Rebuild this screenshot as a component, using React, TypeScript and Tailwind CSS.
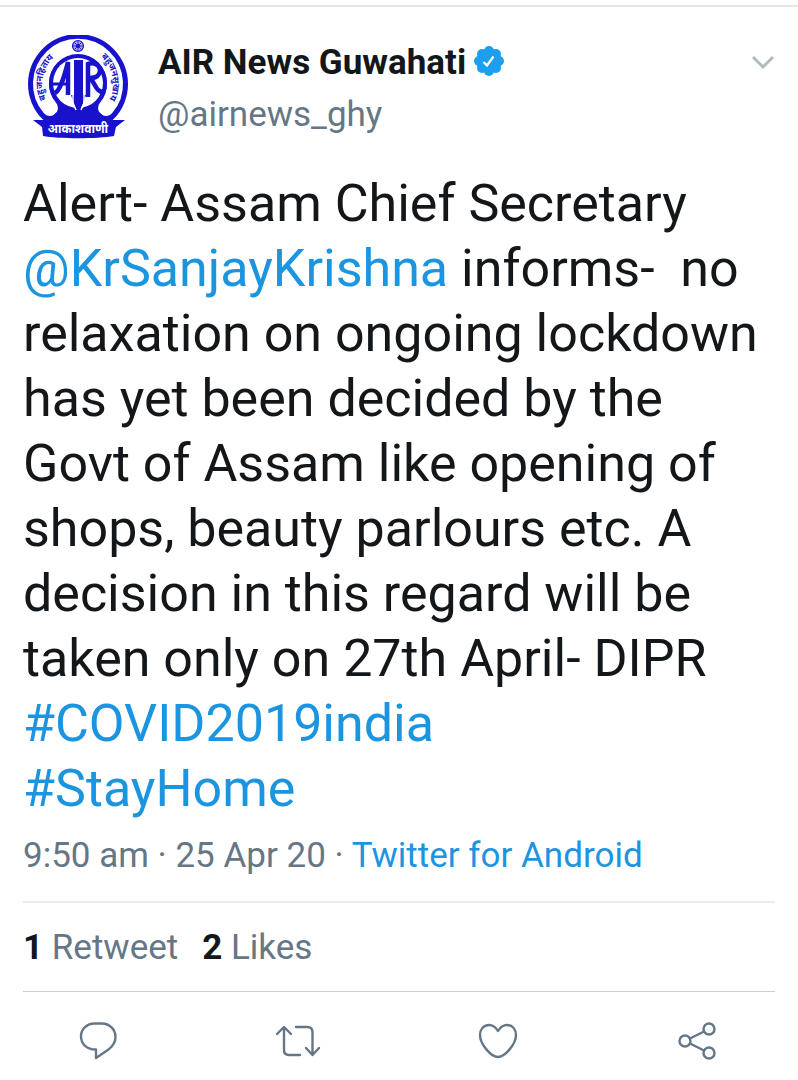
import { useState } from "react";

function Avatar() {
  return (
    <svg viewBox="0 0 100 104" className="h-[104px] w-[100px]" role="img" aria-label="AIR News Guwahati">
      {/* rings */}
      <circle cx="50" cy="49" r="50" fill="#1912cc" />
      <path d="M22 73A37 37 0 1 1 78 73" fill="none" stroke="#fff" strokeWidth="16" strokeLinecap="round" />
      <circle cx="50" cy="48" r="29" fill="#1912cc" />
      <circle cx="50" cy="48" r="25" fill="#fff" />

      {/* star wheel */}
      <circle cx="50" cy="11" r="5.500" fill="#a5a2ee" stroke="#1912cc" strokeWidth="1.2" />
      <path d="M50 6v10M45 11h10M46.500 7.500l7 7M53.500 7.500l-7 7" stroke="#1912cc" strokeWidth="0.8" />
      <circle cx="50" cy="11" r="2" fill="#1912cc" />

      {/* AIR monogram */}
      <g fill="none" stroke="#1912cc">
        <path d="M27 58C33 55 37 38 40 27V60" strokeWidth="4.500" />
        <path d="M25 49H42" strokeWidth="3" />
        <path d="M60 62V29C69 26 74 33 71 39C69 43 65 43 61 43C67 45 67 58 76 57" strokeWidth="4.500" />
      </g>
      <path d="M43 60L49 78H51L58 60" fill="#1912cc" />
      <path d="M46 25h9v44l-4.500 7l-4.500-7z" fill="#1912cc" />
      <path d="M45 24v44l3 7M56 24v44l-3 7" fill="none" stroke="#fff" strokeWidth="1.500" />

      {/* ribbon */}
      <path d="M30 76C40 80 60 80 70 76L80 85H97L88 92L86 101C70 104 30 104 15 101L14 92L5 85H20Z" fill="#1912cc" />
      <text x="50" y="98" textAnchor="middle" fontSize="12" fontWeight="700" fill="#fff" fontFamily="'Noto Sans Devanagari', 'Noto Sans', sans-serif">
        आकाशवाणी
      </text>

      <path id="motto-left" d="M18 64A35 35 0 0 1 29 20" fill="none" />
      <path id="motto-right" d="M73 22A35 35 0 0 1 79 68" fill="none" />
      <g fontSize="9" fontWeight="700" fill="#1912cc" fontFamily="'Noto Sans Devanagari', 'Noto Sans', sans-serif">
        <text>
          <textPath href="#motto-left">बहुजनहिताय</textPath>
        </text>
        <text>
          <textPath href="#motto-right">बहुजनसुखाय</textPath>
        </text>
      </g>
    </svg>
  );
}

function VerifiedBadge() {
  return (
    <svg viewBox="0 0 30 30" className="mb-1 size-[30px] shrink-0" role="img" aria-label="Verified account">
      <g fill="#1d9ff0">
        <circle cx="15" cy="15" r="12.500" />
        <circle cx="15" cy="5" r="5" />
        <circle cx="22" cy="8" r="5" />
        <circle cx="25" cy="15" r="5" />
        <circle cx="22" cy="22" r="5" />
        <circle cx="15" cy="25" r="5" />
        <circle cx="8" cy="22" r="5" />
        <circle cx="5" cy="15" r="5" />
        <circle cx="8" cy="8" r="5" />
      </g>
      <path d="M9.500 16l3.500 3.500L19.500 10.500" fill="none" stroke="#fff" strokeWidth="2.2" />
    </svg>
  );
}

const iconProps = {
  viewBox: "0 0 48 40",
  className: "h-10 w-12",
  fill: "none",
  stroke: "currentColor",
  strokeWidth: 2.4,
  strokeLinecap: "round" as const,
  strokeLinejoin: "round" as const,
};

const actions = [
  {
    label: "Reply",
    icon: (
      <svg {...iconProps}>
        <path d="M19.500 28.500C11 28.500 5 23 5 15.500C5 8 11 2.500 18.500 2.500H26C33.500 2.500 39.500 8.500 39.500 16C39.500 21 37 25 32.500 28.500L20 37V28.500Z" />
      </svg>
    ),
  },
  {
    label: "Retweet",
    icon: (
      <svg {...iconProps}>
        <path d="M2 13L9 6L16 13M9 7V29Q9 34 14 34H25M44 27L37.500 34L31 27M37.500 33V11Q37.500 6 32.500 6H21" />
      </svg>
    ),
  },
  {
    label: "Like",
    icon: (
      <svg {...iconProps}>
        <path d="M23 10C20 5 17 4 14 4C8 4 5 9 5 14C5 23 16 36 23 36C30 36 41 23 41 14C41 9 38 4 32 4C29 4 26 5 23 10Z" />
      </svg>
    ),
  },
  {
    label: "Share",
    icon: (
      <svg {...iconProps}>
        <circle cx="11" cy="20" r="5.500" />
        <circle cx="35" cy="8" r="5.500" />
        <circle cx="35" cy="32" r="5.500" />
        <path d="M16 17.500L30 10.500M16 22.500L30 29.500" />
      </svg>
    ),
  },
];

export default function App() {
  const [open, setOpen] = useState(false);

  return (
    <main className="min-h-screen bg-white pt-[5px] font-['Roboto',sans-serif] text-[#14171a]">
      <article className="border-t-2 border-[#e6e6e6]">
        <header className="flex items-start px-7 pt-7">
          <Avatar />
          <div className="ml-[30px] flex-1 pt-[2px] text-[35px] leading-[52px]">
            <h1 className="flex items-center gap-2 font-bold">
              AIR News Guwahati
              <VerifiedBadge />
            </h1>
            <p className="text-[#657786]">@airnews_ghy</p>
          </div>
          <button type="button" aria-label="More options" aria-expanded={open} onClick={() => setOpen(!open)} className="-mr-2 mt-3">
            <svg viewBox="0 0 32 32" className="size-8" fill="none" stroke="#b0babf" strokeWidth="3">
              <path d="M7 10L17 20L27 10" />
            </svg>
          </button>
        </header>

        <p className="mt-[30px] whitespace-pre-wrap px-[23px] text-[52px] leading-[65px]">
          {"Alert- Assam Chief Secretary "}
          <a href="#profile" className="text-[#1b95e0]">@KrSanjayKrishna</a>
          {" informs-  no relaxation on ongoing lockdown has yet been decided by the Govt of Assam like opening of shops, beauty parlours etc. A decision in this regard will be taken only on 27th April- DIPR\n"}
          <a href="#covid" className="text-[#1b95e0]">#COVID2019india</a>
          {"\n"}
          <a href="#stayhome" className="text-[#1b95e0]">#StayHome</a>
        </p>

        <p className="mt-3 px-[23px] text-[35px] leading-[46px] text-[#657786]">
          9:50 am · 25 Apr 20 ·{" "}
          <a href="#source" className="text-[#1b95e0]">Twitter for Android</a>
        </p>

        <div className="mx-[23px] mt-[22px] flex gap-6 border-b border-t-2 border-b-[#cccfd1] border-t-[#ececec] pb-5 pt-[22px] text-[35px] leading-[46px] text-[#657786]">
          <span>
            <b className="text-[#14171a]">1</b> Retweet
          </span>
          <span>
            <b className="text-[#14171a]">2</b> Likes
          </span>
        </div>

        <div className="mt-[29px] grid grid-cols-4 text-[#657786]">
          {actions.map((a) => (
            <button key={a.label} type="button" aria-label={a.label} className="flex justify-center">
              {a.icon}
            </button>
          ))}
        </div>
      </article>
    </main>
  );
}
